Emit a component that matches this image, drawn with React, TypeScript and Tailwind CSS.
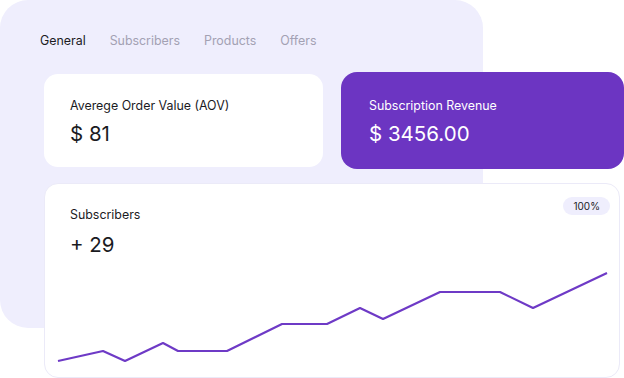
const points = [
  [14, 178], [59, 168], [81, 178], [119, 160], [134, 168], [183, 168], [238, 141],
  [283, 141], [316, 125], [339, 136], [396, 109], [456, 109], [489, 125], [563, 90],
]

function StatCard({ label, value, purple }: { label: string; value: string; purple?: boolean }) {
  return (
    <div
      className={
        purple
          ? 'w-[283px] h-[97px] rounded-[16px] bg-[#6c35c2] text-white pl-[28px] pt-[25px]'
          : 'w-[279px] h-[93px] mt-[2px] rounded-[14px] bg-white text-[#1b1b1f] pl-[26px] pt-[23px]'
      }
    >
      <div className="text-[12.4px] leading-[18px]">{label}</div>
      <div className="mt-[7px] text-[20.5px] leading-[24px]">{value}</div>
    </div>
  )
}

export default function App() {
  const path = points.map(([x, y], i) => `${i ? 'L' : 'M'}${x} ${y}`).join(' ')

  return (
    <div className="relative w-[624px] h-[378px] overflow-hidden bg-white font-['Inter',sans-serif]">
      {/* background panel */}
      <div className="absolute left-0 top-0 w-[483px] h-[328px] rounded-[28px] bg-[#efeefd]" />

      <div className="relative flex flex-col">
        {/* tabs */}
        <div className="flex gap-[24px] pl-[40px] pt-[32px] text-[12.4px] leading-[18px] text-[#a3a1b3]">
          <span className="text-[#1b1b1f]">General</span>
          <span>Subscribers</span>
          <span>Products</span>
          <span>Offers</span>
        </div>

        <div className="flex gap-[18px] pl-[44px] mt-[22px]">
          <StatCard label="Averege Order Value (AOV)" value="$ 81" />
          <StatCard label="Subscription Revenue" value="$ 3456.00" purple />
        </div>

        {/* chart card */}
        <div className="ml-[44px] mt-[14px] w-[576px] h-[195px] rounded-[14px] bg-white border border-[#ebeaf8] relative">
          <div className="flex justify-between pl-[25px] pr-[9px] pt-[13px] h-[80px]">
            <div className="pt-[9px] text-[#1b1b1f]">
              <div className="text-[12.4px] leading-[18px]">Subscribers</div>
              <div className="mt-[9px] text-[20.5px] leading-[24px]">+ 29</div>
            </div>
            <div className="h-[18px] px-[10px] rounded-full bg-[#efeefd] text-[10px] leading-[18px] text-[#1b1b1f]">
              100%
            </div>
          </div>
          <svg width="574" height="113" viewBox="1 81 574 113" className="block">
            <path d={path} fill="none" stroke="#6e3ac6" strokeWidth="2.2" strokeLinejoin="round" />
          </svg>
        </div>
      </div>
    </div>
  )
}
